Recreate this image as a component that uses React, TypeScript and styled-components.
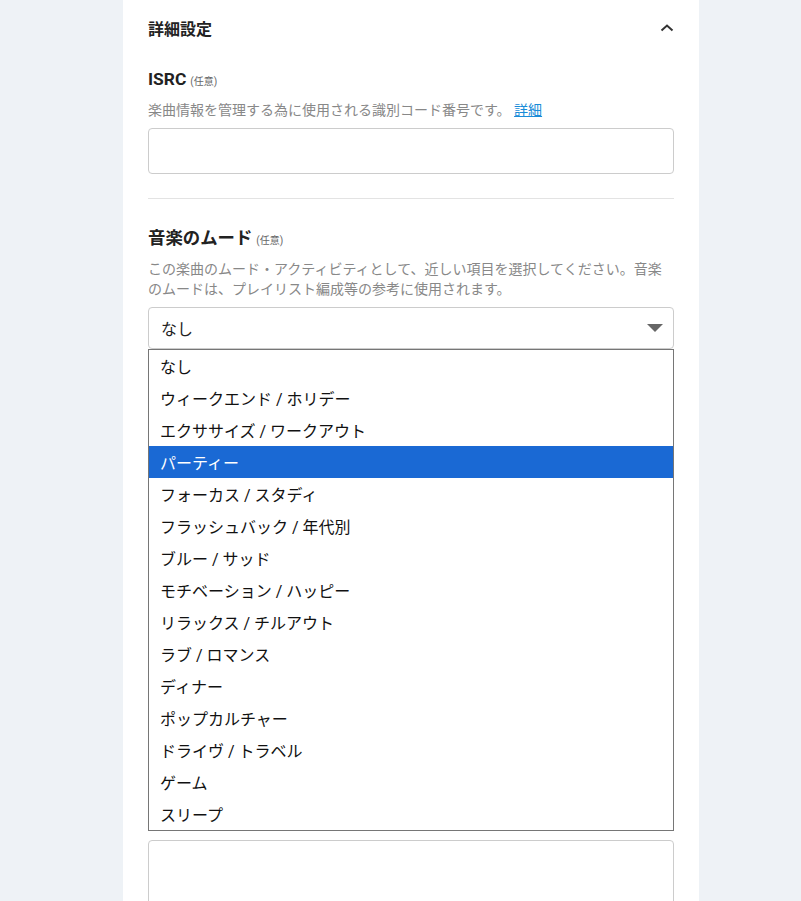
import styled, { createGlobalStyle } from "styled-components";

const GlobalStyle = createGlobalStyle`
    body {
        margin: 0;
        background: #eef2f6;
        font-family: Roboto, "Noto Sans CJK JP", sans-serif;
        color: #222;
    }
`;

const moods = [
    "なし",
    "ウィークエンド / ホリデー",
    "エクササイズ / ワークアウト",
    "パーティー",
    "フォーカス / スタディ",
    "フラッシュバック / 年代別",
    "ブルー / サッド",
    "モチベーション / ハッピー",
    "リラックス / チルアウト",
    "ラブ / ロマンス",
    "ディナー",
    "ポップカルチャー",
    "ドライヴ / トラベル",
    "ゲーム",
    "スリープ",
];

export default function App() {
    return (
        <>
            <GlobalStyle />
            <Styled.Page>
                <Styled.Panel>
                    <Styled.Header>
                        <h2>詳細設定</h2>
                        <ChevronUp />
                    </Styled.Header>

                    <Field>
                        <Label>
                            ISRC<Optional>(任意)</Optional>
                        </Label>
                        <Description>
                            楽曲情報を管理する為に使用される識別コード番号です。 <a href="#">詳細</a>
                        </Description>
                        <TextInput type="text" />
                    </Field>

                    <Divider />

                    <Field>
                        <Label>
                            音楽のムード<Optional>(任意)</Optional>
                        </Label>
                        <Description>
                            この楽曲のムード・アクティビティとして、近しい項目を選択してください。音楽のムードは、プレイリスト編成等の参考に使用されます。
                        </Description>
                        <SelectWrap>
                            <SelectBox>
                                <span>なし</span>
                                <Arrow />
                            </SelectBox>
                            {/* 開いた状態のドロップダウン */}
                            <OptionList>
                                {moods.map((m) => (
                                    <OptionItem key={m} $selected={m === "パーティー"}>
                                        {m}
                                    </OptionItem>
                                ))}
                            </OptionList>
                        </SelectWrap>
                    </Field>

                    <Divider />

                    <Field>
                        <Label>
                            作詞者<Optional>(任意)</Optional>
                        </Label>
                        <Description>作詞者の名前を入力してください。</Description>
                        <TextInput type="text" />
                    </Field>

                    <Divider />

                    <Field>
                        <Label>
                            作曲者<Optional>(任意)</Optional>
                        </Label>
                        <Description>作曲者の名前を入力してください。</Description>
                        <TextInput type="text" />
                    </Field>

                    <Divider />

                    <Field>
                        <Label>
                            歌詞<Optional>(任意)</Optional>
                        </Label>
                        <Description>
                            楽曲の歌詞を入力してください。
                            <br />
                            歌詞は配信ストアで表示される場合があります。
                            <br />
                            改行を含めて入力することができます。
                            <br />
                            歌詞がない場合は空欄のままにしてください。
                        </Description>
                        <TextArea />
                    </Field>
                </Styled.Panel>
            </Styled.Page>
        </>
    );
}

function ChevronUp() {
    return (
        <svg width="14" height="14" viewBox="0 0 14 14">
            <path d="M1.5 9.5 L7 4.5 L12.5 9.5" fill="none" stroke="#333" strokeWidth="2" />
        </svg>
    );
}

function Arrow() {
    return (
        <svg width="16" height="8" viewBox="0 0 16 8">
            <path d="M0 0 H16 L8 8 Z" fill="#666" />
        </svg>
    );
}

const Styled = {
    Page: styled.div`
        padding: 0 102px 0 123px;
        min-height: 901px;
    `,
    Panel: styled.div`
        background: #fff;
        padding: 0 25px 40px;
        min-height: 901px;
        box-sizing: border-box;
    `,
    Header: styled.div`
        height: 56px;
        margin-bottom: 11px;
        display: flex;
        align-items: center;
        justify-content: space-between;
        & h2 {
            margin: 0;
            font-size: 16px;
            font-weight: 700;
            color: #222;
        }
    `,
};

const Field = styled.div`
    display: flex;
    flex-direction: column;
`;

const Label = styled.div`
    font-size: 17.4px;
    font-weight: 700;
    line-height: 24px;
    height: 24px;
    color: #222;
    margin-bottom: 9px;
    display: flex;
    align-items: baseline;
`;

const Optional = styled.span`
    font-size: 10px;
    font-weight: 400;
    color: #666;
    margin-left: 4px;
`;

const Description = styled.p`
    margin: 0 0 8px;
    font-size: 14px;
    line-height: 20px;
    color: #888;
    & a {
        color: #1a8cd8;
        text-decoration: underline;
    }
`;

const TextInput = styled.input`
    box-sizing: border-box;
    height: 46px;
    width: 100%;
    border: 1px solid #ccc;
    border-radius: 4px;
    padding: 0 12px;
    font-size: 16px;
`;

const TextArea = styled.textarea`
    box-sizing: border-box;
    height: 160px;
    width: 100%;
    border: 1px solid #ccc;
    border-radius: 4px;
    resize: none;
`;

const Divider = styled.hr`
    border: 0;
    border-top: 1px solid #e3e3e3;
    margin: 24px 0 27px;
`;

const SelectWrap = styled.div`
    position: relative;
`;

const SelectBox = styled.div`
    box-sizing: border-box;
    height: 42px;
    border: 1px solid #ccc;
    border-radius: 4px;
    display: flex;
    align-items: center;
    justify-content: space-between;
    padding: 0 10px 0 12px;
    font-size: 16px;
    color: #222;
`;

const OptionList = styled.ul`
    position: absolute;
    top: 100%;
    left: 0;
    right: 0;
    margin: 0;
    padding: 0;
    list-style: none;
    background: #fff;
    border: 1px solid #767676;
    z-index: 10;
`;

const OptionItem = styled.li<{ $selected?: boolean }>`
    box-sizing: border-box;
    height: 32px;
    padding: 3px 0 0 11px;
    line-height: 29px;
    font-size: 16px;
    color: ${(p) => (p.$selected ? "#fff" : "#111")};
    background: ${(p) => (p.$selected ? "#1a69d4" : "transparent")};
`;
